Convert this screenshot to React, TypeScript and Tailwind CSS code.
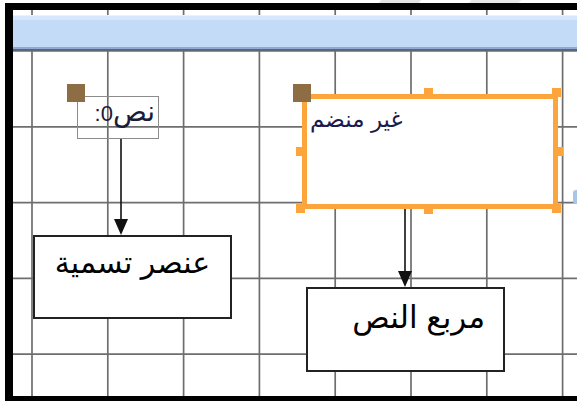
import React from 'react';

const CELL = 75.8;
const W = 564;
const H = 386;

function Grid() {
  const xs = Array.from({ length: 8 }, (_, i) => 19 + i * CELL);
  const ys = Array.from({ length: 5 }, (_, i) => 41 + i * CELL);
  return (
    <svg className="absolute left-0 top-0" width={W} height={H}>
      {xs.map((x) => (
        <line key={'v' + x} x1={x} y1={0} x2={x} y2={H} stroke="#6e6e6e" strokeWidth={1.7} />
      ))}
      {ys.map((y) => (
        <line key={'h' + y} x1={0} y1={y} x2={W} y2={y} stroke="#6e6e6e" strokeWidth={1.7} />
      ))}
    </svg>
  );
}

function Arrow({ x, y1, y2 }: { x: number; y1: number; y2: number }) {
  const h = y2 - y1;
  return (
    <svg className="absolute" style={{ left: x - 8, top: y1 }} width={16} height={h}>
      <line x1={8} y1={0} x2={8} y2={h - 14} stroke="#111" strokeWidth={1.6} />
      <polygon points={`1,${h - 16} 15,${h - 16} 8,${h}`} fill="#111" />
    </svg>
  );
}

function Handle({ className }: { className: string }) {
  return <div className={`absolute w-[9px] h-[9px] bg-[#fba53c] ${className}`} />;
}

export default function App() {
  const arabic = { fontFamily: '"Liberation Sans", "DejaVu Sans", sans-serif' };
  return (
    <div className="w-[577px] h-[402px] bg-white overflow-hidden relative" style={arabic}>
      {/* faint marks above the frame */}
      <div className="absolute left-[380px] top-0 w-[40px] h-[3px] bg-[#e4e4e4] -skew-x-[40deg]" />
      <div className="absolute left-[470px] top-0 w-[50px] h-[3px] bg-[#e8e8e8] -skew-x-[40deg]" />

      <div className="ml-[5px] mt-[3px] w-[572px] h-[398px] border-l-[8px] border-t-[7px] border-b-[5px] border-black">
        <div className="relative w-[564px] h-[386px] bg-white overflow-hidden">
          <Grid />

          {/* header band */}
          <div className="relative mt-[5px] h-[36px] bg-[linear-gradient(to_bottom,#eaf3fd_0px,#eaf3fd_1px,#d6e7fb_1px,#d6e7fb_5px,#c4dbf8_5px,#c4dbf8_32px,#8eaad4_32px,#8eaad4_34px,#5f6670_34px)]" />

          {/* label control */}
          <div className="absolute left-[64px] top-[86px] w-[82px] h-[43px] border border-[#8c8c8c] flex justify-end items-baseline pr-[3px] pt-[2px] leading-[26px] text-[#1b1b3a] whitespace-nowrap">
            <span className="text-[22px]">:0</span>
            <span dir="rtl" className="text-[28px]">نص</span>
          </div>
          <div className="absolute left-[54px] top-[74px] w-[18px] h-[18px] bg-[#8e6d45]" />

          <Arrow x={107.7} y1={129} y2={225} />

          <div
            dir="rtl"
            className="absolute left-[20px] top-[225px] w-[199px] h-[84px] border-2 border-[#222] bg-white text-center pt-[8px] text-[30px] leading-[36px] text-black whitespace-nowrap"
          >
            عنصر تسمية
          </div>

          {/* text box control */}
          <div className="absolute left-[289px] top-[84px] w-[256px] h-[115px] border-[5px] border-[#fba53c] bg-white">
            <div dir="rtl" className="text-left pl-[3px] pt-[6px] text-[23px] leading-[28px] text-[#1b1b50]">
              غير منضم
            </div>
            <Handle className="left-[117px] -top-[11px]" />
            <Handle className="left-[245px] -top-[11px]" />
            <Handle className="-left-[11px] top-[48px]" />
            <Handle className="left-[247px] top-[48px]" />
            <Handle className="-left-[11px] top-[105px]" />
            <Handle className="left-[117px] top-[106px]" />
            <Handle className="left-[245px] top-[105px]" />
          </div>
          <div className="absolute left-[280px] top-[74px] w-[18px] h-[18px] bg-[#8e6d45]" />

          <Arrow x={391.5} y1={199} y2={277} />

          <div
            dir="rtl"
            className="absolute left-[293px] top-[277px] w-[199px] h-[85px] border-2 border-[#222] bg-white text-right pr-[18px] pt-[11px] text-[31px] leading-[36px] text-black whitespace-nowrap"
          >
            مربع النص
          </div>

          {/* partly visible control at right edge */}
          <div className="absolute left-[560px] top-[180px] w-[8px] h-[14px] rounded-[3px] bg-[#a9c6e6]" />
        </div>
      </div>
    </div>
  );
}
